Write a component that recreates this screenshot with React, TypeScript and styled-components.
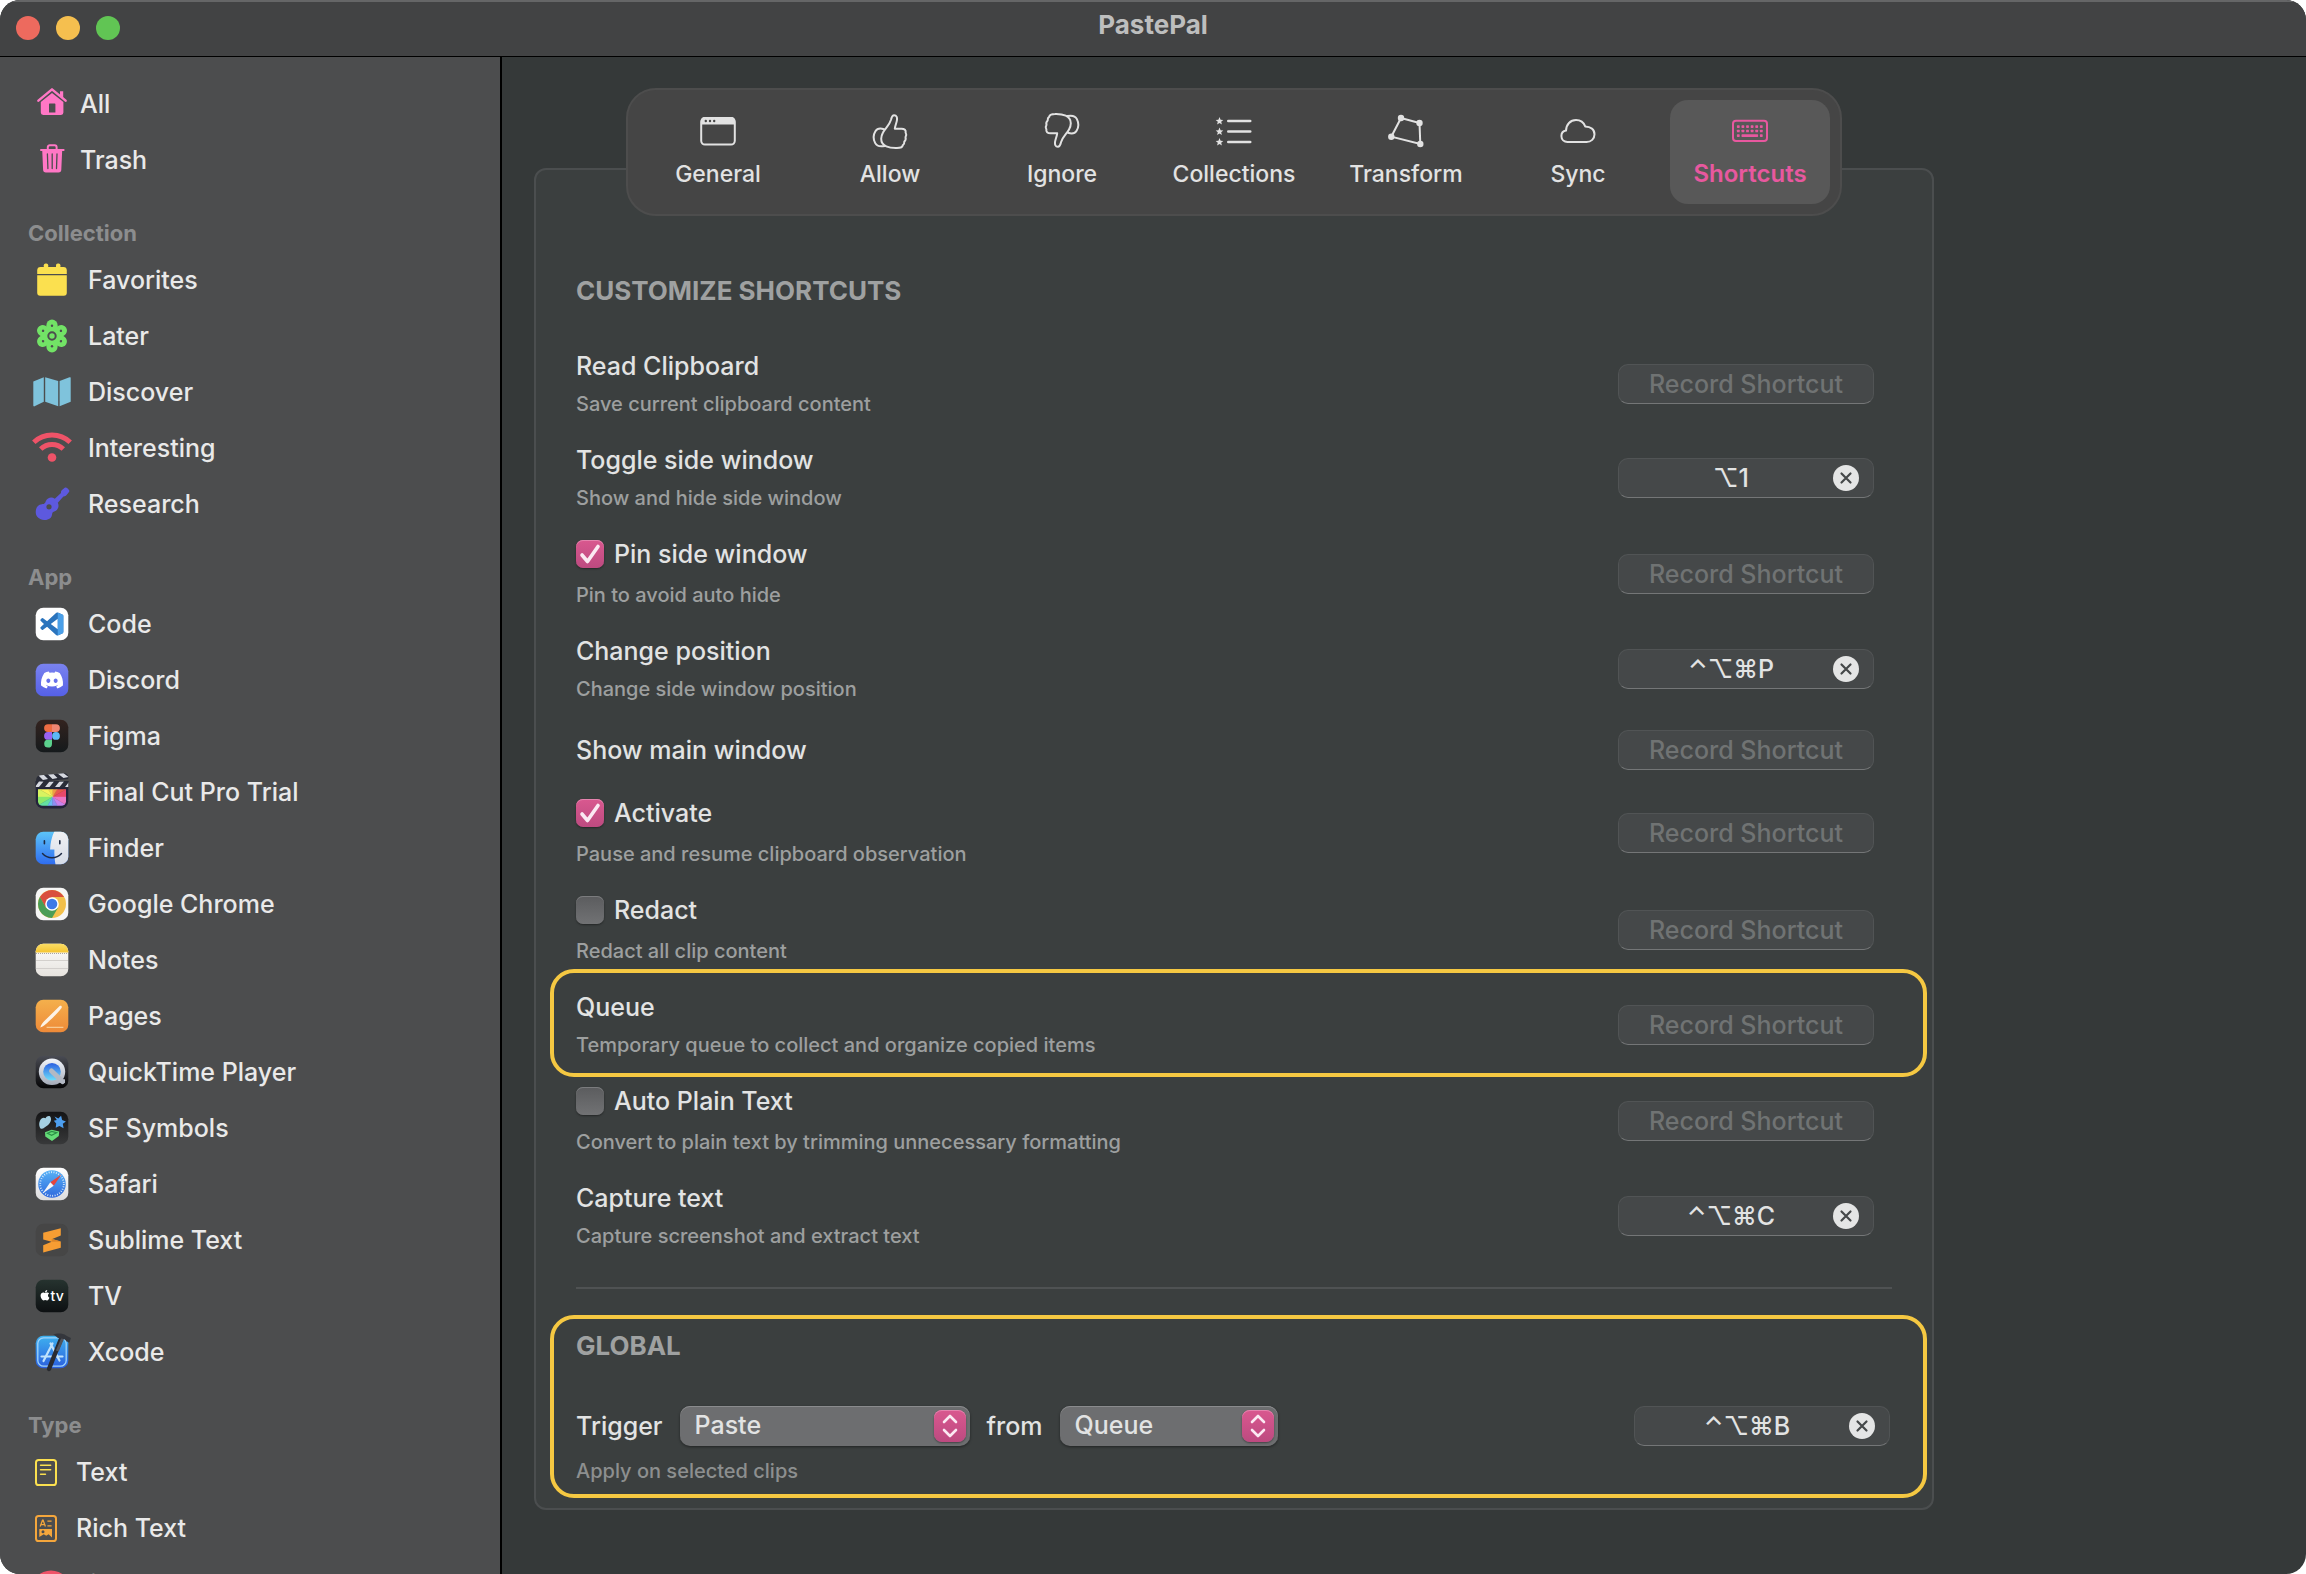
import React, { useState } from "react";
import type { ReactNode } from "react";
import styled, { createGlobalStyle, css } from "styled-components";
import { FaApple, FaDiscord } from "react-icons/fa";

const GlobalStyle = createGlobalStyle`
  *, *::before, *::after { box-sizing: border-box; }
  body {
    margin: 0;
    background: #ffffff;
    font-family: Inter, "DejaVu Sans", "Liberation Sans", sans-serif;
    font-size: 25px;
    font-weight: 500;
    color: #e2e3e3;
    -webkit-font-smoothing: antialiased;
  }
  button, input, select { font: inherit; color: inherit; margin: 0; }
`;

/* ---------- window ---------- */

const Window = styled.div`
  display: flex;
  flex-direction: column;
  height: 100vh;
  overflow: hidden;
  border-radius: 20px;
  background: #353939;
`;

const TitleBar = styled.header`
  display: grid;
  grid-template-columns: 1fr auto 1fr;
  align-items: center;
  height: 57px;
  flex: none;
  padding: 0 16px 2px;
  background: #424344;
  border-top: 2px solid #656667;
  border-bottom: 1px solid #000000;
`;

const Lights = styled.div`
  display: flex;
  gap: 16px;
`;

const Light = styled.button<{ $color: string }>`
  width: 24px;
  height: 24px;
  padding: 0;
  border: 0;
  border-radius: 50%;
  background: ${(p) => p.$color};
`;

const WindowTitle = styled.h1`
  margin: 0;
  padding-bottom: 6px;
  font-size: 26px;
  line-height: 30px;
  font-weight: 700;
  color: #bdbebe;
`;

const Body = styled.div`
  display: flex;
  flex: 1;
  min-height: 0;
`;

/* ---------- sidebar ---------- */

const Sidebar = styled.nav`
  width: 502px;
  flex: none;
  overflow: hidden;
  padding-top: 19px;
  background: #4c4d4e;
  border-right: 2px solid #000000;
`;

const GroupTitle = styled.h2`
  margin: 0;
  padding: 30px 28px 4px;
  font-size: 22px;
  line-height: 30px;
  font-weight: 700;
  color: #8c8d8e;
`;

const List = styled.ul`
  margin: 0;
  padding: 0;
  list-style: none;
`;

const Item = styled.a<{ $gap: number }>`
  display: flex;
  align-items: center;
  gap: ${(p) => p.$gap}px;
  height: 56px;
  padding: 0 32px;
  color: #e9e9e9;
  text-decoration: none;
  white-space: nowrap;
`;

const Glyph = styled.svg<{ $narrow?: boolean }>`
  width: ${(p) => (p.$narrow ? 28 : 40)}px;
  height: 40px;
  flex: none;
  overflow: visible;
`;

/* ---------- tabs ---------- */

const Main = styled.main`
  flex: 1;
  min-width: 0;
  overflow: hidden;
  padding: 31px 32px;
`;

const Column = styled.div`
  display: flex;
  flex-direction: column;
  align-items: center;
  max-width: 1400px;
`;

const TabBar = styled.div`
  position: relative;
  z-index: 1;
  display: flex;
  gap: 12px;
  margin-bottom: -48px;
  padding: 10px;
  border: 2px solid #4d4d4d;
  border-radius: 30px;
  background: #454545;
`;

const Tab = styled.button`
  display: flex;
  flex-direction: column;
  align-items: center;
  width: 160px;
  height: 104px;
  padding: 11px 0 0;
  gap: 8px;
  border: 0;
  border-radius: 18px;
  background: transparent;
  color: #e2e2e2;
  font-size: 23px;
  line-height: 30px;
  font-weight: 500;

  &[aria-selected="true"] {
    background: #585858;
    color: #e8589f;
    font-size: 24px;
    font-weight: 600;
  }
`;

/* ---------- panel ---------- */

const Panel = styled.section`
  width: 100%;
  padding: 106px 0 10px;
  border: 2px solid #4b4e4f;
  border-radius: 12px;
  background: #3b3f3f;
`;

const SectionTitle = styled.h2`
  margin: 0;
  font-size: 26px;
  line-height: 30px;
  font-weight: 700;
  color: #9fa1a1;
`;

const ShortcutSection = styled.div`
  padding: 0 58px 38px 40px;
`;

const Rows = styled.div`
  display: flex;
  flex-direction: column;
  gap: 28px;
  padding-top: 45px;
`;

const Row = styled.div<{ $marked?: boolean }>`
  position: relative;
  display: flex;
  align-items: center;
  justify-content: space-between;
  gap: 24px;

  ${(p) =>
    p.$marked &&
    css`
      &::after {
        content: "";
        position: absolute;
        inset: -23px -53px -19px -26px;
        border: 4px solid #f5c842;
        border-radius: 24px;
        pointer-events: none;
      }
    `}
`;

const Texts = styled.div<{ $gap: number }>`
  display: flex;
  flex-direction: column;
  gap: ${(p) => p.$gap}px;
`;

const RowTitle = styled.span`
  line-height: 30px;
`;

const CheckLabel = styled.label`
  display: flex;
  align-items: center;
  gap: 10px;
  line-height: 30px;
`;

const Note = styled.span<{ $dim?: boolean }>`
  font-size: 20px;
  line-height: 26px;
  color: ${(p) => (p.$dim ? "#8d8f8f" : "#9d9f9f")};
`;

const CheckBox = styled.input`
  appearance: none;
  width: 28px;
  height: 28px;
  flex: none;
  border-radius: 7px;
  background: linear-gradient(#5b5c5e, #717274);
  box-shadow: inset 0 1px 0 #7b7c7e, 0 1px 2px rgba(0, 0, 0, 0.4);

  &:checked {
    background: linear-gradient(#d9588f, #bd4a80);
    box-shadow: inset 0 1px 0 #e484ae, 0 1px 2px rgba(0, 0, 0, 0.4);
  }
`;

const CheckHolder = styled.span`
  position: relative;
  display: flex;
`;

const CheckMark = styled.svg`
  position: absolute;
  inset: 0;
  width: 28px;
  height: 28px;
  pointer-events: none;
`;

const Field = styled.div`
  display: flex;
  align-items: center;
  width: 256px;
  height: 40px;
  flex: none;
  padding: 0 14px 0 10px;
  border: 1px solid #515455;
  border-bottom-color: #747677;
  border-radius: 10px;
  background: #454849;
`;

const Record = styled.button<{ $empty?: boolean }>`
  flex: 1;
  height: 38px;
  padding: ${(p) => (p.$empty ? "1px 0 0 4px" : "1px 0 0")};
  border: 0;
  background: transparent;
  line-height: 37px;
  text-align: center;
  white-space: nowrap;
  color: ${(p) => (p.$empty ? "#707373" : "#e2e3e3")};
`;

const Clear = styled.button`
  display: flex;
  width: 26px;
  height: 26px;
  padding: 0;
  border: 0;
  border-radius: 50%;
  background: #e4e5e5;
  color: #454849;
`;

const Divider = styled.hr`
  height: 2px;
  margin: 0 40px 26px;
  border: 0;
  background: #4f5253;
`;

const GlobalSection = styled.div`
  margin: 0 5px 0 14px;
  padding: 12px 33px 10px 22px;
  border: 4px solid #f5c842;
  border-radius: 24px;
`;

const TriggerRow = styled.div`
  display: flex;
  align-items: center;
  justify-content: space-between;
  padding: 45px 0 8px;
`;

const Sentence = styled.div`
  display: flex;
  align-items: center;
  gap: 17px;
`;

const SelectHolder = styled.span<{ $width: number }>`
  position: relative;
  display: flex;
  width: ${(p) => p.$width}px;
`;

const Picker = styled.select`
  appearance: none;
  width: 100%;
  height: 40px;
  padding: 0 44px 2px 15px;
  border: 0;
  border-radius: 10px;
  background: #6d6e70;
  box-shadow: inset 0 1px 0 #8a8b8d, 0 1px 3px rgba(0, 0, 0, 0.45);
`;

const Stepper = styled.svg`
  position: absolute;
  top: 4px;
  right: 4px;
  width: 32px;
  height: 32px;
  border-radius: 8px;
  background: linear-gradient(#d9588f, #bd4a80);
  box-shadow: inset 0 1px 0 #e484ae, 0 1px 2px rgba(0, 0, 0, 0.4);
  pointer-events: none;
`;

/* ---------- sidebar symbols (40 x 40) ---------- */

const house = (
  <g fill="#ff77c5">
    <path d="M6.4 16.6 20 5.4l13.6 11.2" fill="none" stroke="#ff77c5" strokeWidth="2.5" strokeLinecap="round" strokeLinejoin="round" />
    <path d="M28 7.3h3.2v7.5L28 12z" />
    <path fillRule="evenodd" d="M8.8 18 20 8.9 31.4 18v10.6a2.4 2.4 0 0 1-2.4 2.4H11.2a2.4 2.4 0 0 1-2.4-2.4zM17.6 19.6a.6.6 0 0 0-.6.6v8.4h6.4v-8.4a.6.6 0 0 0-.6-.6z" />
  </g>
);

const trash = (
  <g>
    <path d="M15.8 9.4V7.2a2 2 0 0 1 2-2h4.8a2 2 0 0 1 2 2v2.2" fill="none" stroke="#ff77c5" strokeWidth="2" />
    <path d="M9 10h22.6" stroke="#ff77c5" strokeWidth="2" strokeLinecap="round" />
    <path d="M10.2 10h20l-.9 19.8a2.8 2.8 0 0 1-2.8 2.7h-12.6a2.8 2.8 0 0 1-2.8-2.7z" fill="#ff77c5" />
    <path d="M15.4 14l.5 14.5M20.2 14v14.5M25 14l-.5 14.5" stroke="#4c4d4e" strokeWidth="1.3" strokeLinecap="round" />
  </g>
);

const calendar = (
  <g fill="#fbe04f">
    <rect x="11.8" y="3.5" width="4.4" height="6" rx="1.8" />
    <rect x="24" y="3.5" width="4.4" height="6" rx="1.8" />
    <path d="M5.2 14v-3.5a3.4 3.4 0 0 1 3.4-3.4h22.8a3.4 3.4 0 0 1 3.4 3.4V14z" />
    <path d="M5.2 15.3h29.6v17.5a3 3 0 0 1-3 3H8.2a3 3 0 0 1-3-3z" />
  </g>
);

const atom = (
  <g>
    <g fill="#72e366">
      {[0, 60, 120].map((a) => (
        <rect key={a} x="14.4" y="3.6" width="11.2" height="32.8" rx="5.6" transform={`rotate(${a} 20 20)`} />
      ))}
      <circle cx="20" cy="20" r="10.5" />
    </g>
    <circle cx="20" cy="20" r="3.7" fill="#72e366" stroke="#4c4d4e" strokeWidth="2" />
    {[0, 60, 120, 180, 240, 300].map((a) => (
      <circle key={a} cx="20" cy="9.7" r="1.2" fill="#4c4d4e" transform={`rotate(${a} 20 20)`} />
    ))}
  </g>
);

const map = (
  <g fill="#7fc3dc">
    <path d="M1.3 9.6 11.8 5.3v24.5L2.5 34.3a.8.8 0 0 1-1.2-.7z" />
    <path d="M13.2 5.3 26.2 9v25.3l-13-4.5z" />
    <path d="M27.6 9l9.9-3.7a.8.8 0 0 1 1.2.7v23.8l-11.1 4.5z" />
  </g>
);

const wifi = (
  <g fill="none" stroke="#ef5368" strokeWidth="5">
    <path d="M1.8 14.3a26.5 26.5 0 0 1 36.4 0" />
    <path d="M8.7 21a16.5 16.5 0 0 1 22.6 0" />
    <circle cx="20" cy="29.5" r="4.3" fill="#ef5368" stroke="none" />
  </g>
);

const guitar = (
  <g>
    <path
      d="M3.8 29c-.5-5 2-8.4 6-8.7 3.2-.3 3.3-1.3 4-3 1.6-3.7 5.7-4.8 9-2.6l6.2-5.8c-.2-1.4.3-2.4 1.3-3.2l2.4-1.9c.8-.6 1.7-.5 2.4.2l1.7 1.8c.7.8.7 1.7 0 2.5l-2.2 2.8c-.8 1-1.7 1.4-3.2 1.3l-5.6 6.3c1.7 3.6.3 7.2-3 8.5-1.8.7-2.5 1-2.7 3-.4 3.8-3.5 6-8 5.7-4.8-.4-7.900-3-8.300-6.900z"
      fill="#5d59de"
    />
    <circle cx="17" cy="22.8" r="2.6" fill="#4c4d4e" />
  </g>
);

/* ---------- application icons (40 x 40) ---------- */

const tile = (fill: string) => <rect x="3.7" y="3.7" width="32.6" height="32.6" rx="7.6" fill={fill} />;

const fade = (id: string, from: string, to: string) => (
  <linearGradient id={id} x1="0" y1="0" x2="0" y2="1">
    <stop offset="0" stopColor={from} />
    <stop offset="1" stopColor={to} />
  </linearGradient>
);

const codeApp = (
  <g>
    {tile("#ffffff")}
    <svg x="8.2" y="8.3" width="23.4" height="23.4" viewBox="0 0 24 24">
      <path
        fill="#2b74bd"
        d="M23.15 2.587L18.21.21a1.494 1.494 0 0 0-1.705.29l-9.46 8.63-4.12-3.128a.999.999 0 0 0-1.276.057L.327 7.261A1 1 0 0 0 .326 8.74L3.899 12 .326 15.26a1 1 0 0 0 .001 1.479L1.65 17.94a.999.999 0 0 0 1.276.057l4.12-3.128 9.46 8.63a1.492 1.492 0 0 0 1.704.29l4.942-2.377A1.5 1.5 0 0 0 24 20.06V3.939a1.5 1.5 0 0 0-.85-1.352zm-5.146 14.861L10.826 12l7.178-5.448v10.896z"
      />
      <path fill="#4a9fe8" d="M18 .1l5.15 2.487A1.5 1.5 0 0 1 24 3.94v16.12a1.5 1.5 0 0 1-.85 1.352L18 23.9z" />
    </svg>
  </g>
);

const discordApp = (
  <g>
    <defs>{fade("discord", "#7a83ef", "#5560e6")}</defs>
    {tile("url(#discord)")}
    <FaDiscord x="8" y="8" size={24} color="#ffffff" />
  </g>
);

const figmaApp = (
  <g>
    <defs>{fade("figma", "#33231f", "#151a1c")}</defs>
    {tile("url(#figma)")}
    <path d="M20 8.2h-4a3.9 3.9 0 0 0 0 7.8h4z" fill="#ee6c43" />
    <path d="M20 8.2h4a3.9 3.9 0 0 1 0 7.8h-4z" fill="#f08672" />
    <path d="M20 16h-4a3.9 3.9 0 0 0 0 7.8h4z" fill="#9a62f2" />
    <circle cx="24" cy="19.9" r="3.9" fill="#5cb8f5" />
    <path d="M20 23.8h-4a3.9 3.9 0 1 0 4 3.9z" fill="#5bd18c" />
  </g>
);

const wheel = ["#e8486a", "#e9584d", "#f09a45", "#f8d44b", "#f6f25a", "#d8f360", "#8be86a", "#63e0a2", "#6bb9f2", "#8f8ff3", "#c882ee", "#ea76c4"];

const finalCutApp = (
  <g>
    <defs>
      <clipPath id="fc-screen">
        <path d="M6 17.2h28v12a4.6 4.6 0 0 1-4.6 4.6H10.6A4.6 4.6 0 0 1 6 29.2z" />
      </clipPath>
      <clipPath id="fc-slate">
        <path d="M4.2 7.6C4.2 5 6 3.6 8.4 3.2L32 1.2c2.4-.2 4 1.2 4.2 3.5l.1 2.4-28 2.6 28-.4v6H3.8z" />
      </clipPath>
    </defs>
    <path d="M3.7 9h32.6v20a7.6 7.6 0 0 1-7.6 7.6H11.3A7.6 7.6 0 0 1 3.7 29z" fill="#23243a" />
    <path d="M3.7 9h32.6v6.5H3.7z" fill="#2a2d38" />
    <g clipPath="url(#fc-slate)">
      <rect x="3" y="0" width="34" height="16" fill="#2a2d38" />
      <g fill="#d6d9e0">
        <path d="M6 3l5-1 5 5-5 1zM15.5 2l5-1 5 5-5 1zM25 1l5-1 6.5 5-5 1z" />
        <path d="M3 15l4-5.5h4.5L7 15zM13 15l4.5-5.500H22L17.500 15zM23 15l4.500-5.500H32L27.500 15zM33 15l4-5v5z" />
      </g>
    </g>
    <g clipPath="url(#fc-screen)">
      {wheel.map((color, i) => {
        const from = (-i * 30 * Math.PI) / 180;
        const to = (-(i + 1) * 30 * Math.PI) / 180;
        const at = (t: number) => `${20.7 + 26 * Math.cos(t)} ${25 + 26 * Math.sin(t)}`;
        return <path key={color} d={`M20.7 25L${at(from)}L${at(to)}z`} fill={color} stroke={color} strokeWidth="0.4" />;
      })}
    </g>
  </g>
);

const finderApp = (
  <g>
    <defs>
      {fade("finder-l", "#5cc4f8", "#2f6df0")}
      {fade("finder-r", "#f1f2f4", "#d5dce8")}
      <clipPath id="finder-clip">{tile("#fff")}</clipPath>
    </defs>
    {tile("url(#finder-l)")}
    <path clipPath="url(#finder-clip)" d="M22.5 3c-2.600 5.500-4.300 12-4.400 18.500h4.300c-.2 5 .2 10 1.200 15.500H37V3z" fill="url(#finder-r)" />
    <path d="M12.4 12.8v3M27.8 12.8v3" stroke="#1d2b45" strokeWidth="1.6" strokeLinecap="round" />
    <path d="M10.5 25.5c5 5.600 14 5.600 19 0" fill="none" stroke="#1d2b45" strokeWidth="1.4" strokeLinecap="round" />
  </g>
);

const chromeApp = (
  <g>
    {tile("#f6f6f5")}
    <circle cx="20" cy="20" r="14" fill="#f3c04a" />
    <path d="M7.88 13A14 14 0 0 1 32.12 13H20l-6.5 10.5z" fill="#d94f3e" />
    <path d="M7.88 13A14 14 0 0 0 20 34l6.1-10.5H13.9z" fill="#4a9d55" />
    <circle cx="20" cy="20" r="6.8" fill="#ffffff" />
    <circle cx="20" cy="20" r="5.3" fill="#3f7ae6" />
  </g>
);

const notesApp = (
  <g>
    <defs>
      {fade("notes-page", "#fdfdfc", "#e6e3de")}
      {fade("notes-top", "#fadf6a", "#f5c531")}
      <clipPath id="notes-clip">{tile("#fff")}</clipPath>
    </defs>
    {tile("url(#notes-page)")}
    <rect clipPath="url(#notes-clip)" x="3" y="3" width="34" height="9.5" fill="url(#notes-top)" />
    <path d="M4 13.5h32" stroke="#a9a69f" strokeWidth="1" strokeDasharray="1 1" />
    <path d="M4 20.5h32M4 28.5h32" stroke="#cfccc8" strokeWidth="0.9" />
  </g>
);

const pagesApp = (
  <g>
    <defs>{fade("pages", "#f4b04c", "#ee8a38")}</defs>
    {tile("url(#pages)")}
    <path d="M8.3 31.5c.8-2.600 2.300-4.700 4.800-7.200L27.400 10.300c1.500-1.200 3.100 0 2.100 1.700-2.300 3.500-9.600 10.700-14.600 15.200-2.200 2-4 3.200-6.600 4.300z" fill="#fdf3e6" />
    <path d="M15 31.3h16" stroke="#fbd9a8" strokeWidth="1" strokeLinecap="round" />
  </g>
);

const quickTimeApp = (
  <g>
    <defs>
      {fade("qt-tile", "#4a4c54", "#050506")}
      {fade("qt-ring", "#f2f5fb", "#a4abb8")}
      {fade("qt-lens", "#2b5fe0", "#6fe0fb")}
    </defs>
    {tile("url(#qt-tile)")}
    <circle cx="20" cy="19.8" r="13.2" fill="url(#qt-ring)" />
    <circle cx="20" cy="19.8" r="8.8" fill="url(#qt-lens)" />
    <path d="M19.500 19l11 10.500" stroke="#b3b9c4" strokeWidth="5" strokeLinecap="round" />
    <path d="M27 31h6v-4z" fill="#b3b9c4" />
  </g>
);

const sfSymbolsApp = (
  <g>
    <defs>{fade("sf", "#141415", "#38393a")}</defs>
    {tile("url(#sf)")}
    <path d="M8.500 20.500c-2-2.800-1.600-7.300.8-9.700 1.700-1.600 3.200-1.300 4.200-.5 1.300-2.300 4.200-3.100 5.200-.8 1 2.800-.5 6.100-3.300 8-2.300 1.600-4.500 4-6.900 3z" fill="#a5d0e2" />
    <path d="M22.500 8.500l3.800 1.900 2.800-2.600 1 4.200 3.800 1.400-3.100 2.400.8 4.400-4.200-2.100-3.700 1.700.5-4.300-2.400-2.800 3-.6z" fill="#4d9ff0" />
    <path d="M13 24.300l6.700-2.600 7.500 1.800-.4 4.500-6.800 5-6.700-4.500z" fill="#65dc78" />
    <path d="M15.500 25.200l4.200-1.700 4.900 1.200-5 2.600z" fill="none" stroke="#2b8f46" strokeWidth="1.2" />
  </g>
);

const safariApp = (
  <g>
    <defs>
      {fade("safari-tile", "#ffffff", "#dcdcde")}
      {fade("safari", "#58b2f6", "#2f69dd")}
    </defs>
    {tile("url(#safari-tile)")}
    <circle cx="20" cy="20" r="13.8" fill="url(#safari)" />
    <circle cx="20" cy="20" r="11.8" fill="none" stroke="#dfeefd" strokeWidth="1.8" strokeDasharray="0.9 1.57" />
    <path d="M29.5 10.5 18.3 18.3 21.7 21.7z" fill="#e5453d" />
    <path d="M10.5 29.5 18.3 18.3 21.7 21.7z" fill="#f5f6f8" />
  </g>
);

const sublimeApp = (
  <g>
    {tile("#464646")}
    <path d="M11.2 12.8 28.8 8.2v7.4l-8.5 3.500 8.500 2.400v6.300l-17.600 4.700v-7.200l8.500-3.600-8.500-2.300z" fill="#f69d33" />
    <path d="M19.7 21.7 28.8 21.5l-9.1-2.600z" fill="#d98428" />
  </g>
);

const tvApp = (
  <g>
    <defs>{fade("tv", "#26332f", "#0d1012")}</defs>
    {tile("url(#tv)")}
    <FaApple x="7" y="13.2" size={12} color="#ffffff" />
    <text x="18.6" y="25.2" fontSize="14" fontWeight="500" fill="#ffffff">
      tv
    </text>
  </g>
);

const xcodeApp = (
  <g>
    <defs>{fade("xcode", "#3fb2ef", "#2a5ede")}</defs>
    {tile("url(#xcode)")}
    <rect x="5.8" y="5.8" width="28.4" height="28.4" rx="5.8" fill="none" stroke="#9fd4fb" strokeWidth="1.3" />
    <g fill="none" stroke="#bfe2fc" strokeWidth="2.2" strokeLinecap="round">
      <path d="M20.500 11.500 11.500 29M18.500 11.500l9 17" />
      <path d="M9.5 24.5h21" />
    </g>
    <path d="M28.500 8 17 37" stroke="#2a2b30" strokeWidth="4.4" strokeLinecap="round" />
    <path d="M31 5.5 25.300 19" stroke="#51545c" strokeWidth="3" />
    <path d="M21 2.600c4-1.800 10-1.600 13 .8l2.300 1.400 2.700 1.200-1.500 4.200-3-.8c-1.300-2.200-3.600-3-6.400-2.800-2.700 0-3.600-2.500-7.100-4z" fill="#34363c" />
  </g>
);

/* ---------- type icons (28 x 40) ---------- */

const textType = (
  <g fill="none" stroke="#fbe04f" strokeWidth="2" strokeLinecap="round">
    <rect x="4" y="8" width="20" height="25" rx="2.6" />
    <path d="M8.5 13.2h10.2M8.5 17.7h10.2M8.5 22.2h5" strokeWidth="1.4" />
  </g>
);

const richType = (
  <g>
    <rect x="4" y="8" width="20" height="25" rx="2.6" fill="none" stroke="#f4a63c" strokeWidth="2" />
    <path d="M8.2 18.5l2.300-6.300h.6l2.300 6.300M9 16.600h3.600M15.400 13.200h4.200M15.400 17.800h4.200" fill="none" stroke="#f4a63c" strokeWidth="1.3" />
    <path fillRule="evenodd" d="M7.3 21h12.700v8.500l-3.400-3.200-2.400 1.500-2.400-1.500-4.500 2.700zM11 22.300a1.500 1.500 0 1 0 0 3 1.500 1.500 0 0 0 0-3z" fill="#f4a63c" />
  </g>
);

const linkType = <circle cx="19" cy="26.5" r="20" fill="#ef5368" />;

/* ---------- tab icons (40 x 40) ---------- */

const generalTab = (
  <g>
    <rect x="3.2" y="7" width="33.6" height="26.6" rx="3.8" fill="none" stroke="currentColor" strokeWidth="2" />
    <path d="M3 13.5V10a4 4 0 0 1 4-4h26a4 4 0 0 1 4 4v3.5z" fill="currentColor" />
    <g fill="#454545">
      <circle cx="7.8" cy="10" r="1.2" />
      <circle cx="12" cy="10" r="1.2" />
      <circle cx="16.2" cy="10" r="1.2" />
    </g>
  </g>
);

const thumb = (
  <g fill="none" stroke="currentColor" strokeWidth="2" strokeLinecap="round" strokeLinejoin="round">
    <path d="M13 21.5c2.2-4.3 6.4-7.2 8-12.8.6-2.500.9-4.500 3.100-4.500 2.500 0 3.200 2.300 2.900 4.600-.4 3-1.800 5.600-2.200 8.900h6.700c3 0 4.700 1.700 4.100 3.900.9 1.600.9 3.100-.1 4.500.5 1.700.2 3.300-1.200 4.500.2 1.700-.4 3-1.600 3.800-.2 2.100-2.100 2.600-5.700 2.600-7.500.2-15.800-1.400-15.800-9.200 0-2.400.7-4.300 1.800-6.300z" />
    <path d="M14 18.3c-3.300-1.200-6.900-.7-8.600 2-2 3.200-2 8.200-.3 11.600 1.500 2.900 5.500 3.900 9.700 3" />
  </g>
);

const star = "M0-3.9 1.1-1.3 3.8-1.1 1.7.8 2.4 3.5 0 2-2.4 3.5-1.7.8-3.8-1.1-1.1-1.3z";

const collectionsTab = (
  <g fill="currentColor">
    {[10, 20.5, 31].map((y) => (
      <g key={y}>
        <path d={star} transform={`translate(5.5 ${y})`} />
        <rect x="13" y={y - 1.3} width="24.5" height="2.6" rx="1.3" />
      </g>
    ))}
  </g>
);

const transformTab = (
  <g fill="currentColor" stroke="currentColor" strokeWidth="2">
    <path d="M15 7 33.5 12 34.3 33 5.3 25.7z" fill="none" />
    <g stroke="none">
      <circle cx="15" cy="7" r="3.2" />
      <circle cx="33.5" cy="12" r="3.2" />
      <circle cx="34.3" cy="33" r="3.2" />
      <circle cx="5.3" cy="25.7" r="3.2" />
    </g>
  </g>
);

const cloudTab = (
  <path
    d="M9.5 31c-3.500 0-6.100-2.500-6.100-5.900 0-2.900 1.900-5 4.600-5.500C8.200 13.500 12.400 9 18 9c4.400 0 7.700 2.300 9.200 6.400 5.400.2 9.300 3.100 9.300 7.900 0 4.600-3.400 7.700-8 7.700z"
    fill="none"
    stroke="currentColor"
    strokeWidth="2"
    strokeLinejoin="round"
  />
);

const keyboardTab = (
  <g fill="currentColor">
    <rect x="3" y="9.7" width="34" height="20.4" rx="3" fill="none" stroke="currentColor" strokeWidth="2" />
    {[14.3, 18.7].map((y) =>
      [6.9, 11.5, 16.1, 20.7, 25.3, 29.9].map((x) => <rect key={`${x}-${y}`} x={x} y={y} width="2.8" height="2.6" rx="0.6" />)
    )}
    <rect x="6.9" y="23.3" width="2.8" height="2.6" rx="0.6" />
    <rect x="11.5" y="23.3" width="16.6" height="2.6" rx="0.6" />
    <rect x="29.9" y="23.3" width="2.8" height="2.6" rx="0.6" />
  </g>
);

/* ---------- data ---------- */

type Entry = { label: string; icon: ReactNode };

const topItems: Entry[] = [
  { label: "All", icon: house },
  { label: "Trash", icon: trash },
];

const collections: Entry[] = [
  { label: "Favorites", icon: calendar },
  { label: "Later", icon: atom },
  { label: "Discover", icon: map },
  { label: "Interesting", icon: wifi },
  { label: "Research", icon: guitar },
];

const apps: Entry[] = [
  { label: "Code", icon: codeApp },
  { label: "Discord", icon: discordApp },
  { label: "Figma", icon: figmaApp },
  { label: "Final Cut Pro Trial", icon: finalCutApp },
  { label: "Finder", icon: finderApp },
  { label: "Google Chrome", icon: chromeApp },
  { label: "Notes", icon: notesApp },
  { label: "Pages", icon: pagesApp },
  { label: "QuickTime Player", icon: quickTimeApp },
  { label: "SF Symbols", icon: sfSymbolsApp },
  { label: "Safari", icon: safariApp },
  { label: "Sublime Text", icon: sublimeApp },
  { label: "TV", icon: tvApp },
  { label: "Xcode", icon: xcodeApp },
];

const types: Entry[] = [
  { label: "Text", icon: textType },
  { label: "Rich Text", icon: richType },
  { label: "Link", icon: linkType },
];

const tabs: Entry[] = [
  { label: "General", icon: generalTab },
  { label: "Allow", icon: thumb },
  { label: "Ignore", icon: <g transform="rotate(180 20 20)">{thumb}</g> },
  { label: "Collections", icon: collectionsTab },
  { label: "Transform", icon: transformTab },
  { label: "Sync", icon: cloudTab },
  { label: "Shortcuts", icon: keyboardTab },
];

type Shortcut = { title: string; note?: string; keys?: string; checked?: boolean; marked?: boolean };

const shortcuts: Shortcut[] = [
  { title: "Read Clipboard", note: "Save current clipboard content" },
  { title: "Toggle side window", note: "Show and hide side window", keys: "⌥1" },
  { title: "Pin side window", note: "Pin to avoid auto hide", checked: true },
  { title: "Change position", note: "Change side window position", keys: "⌃⌥⌘P" },
  { title: "Show main window" },
  { title: "Activate", note: "Pause and resume clipboard observation", checked: true },
  { title: "Redact", note: "Redact all clip content", checked: false },
  { title: "Queue", note: "Temporary queue to collect and organize copied items", marked: true },
  { title: "Auto Plain Text", note: "Convert to plain text by trimming unnecessary formatting", checked: false },
  { title: "Capture text", note: "Capture screenshot and extract text", keys: "⌃⌥⌘C" },
];

/* ---------- parts ---------- */

function SideList({ items, gap, narrow }: { items: Entry[]; gap: number; narrow?: boolean }) {
  return (
    <List>
      {items.map((item) => (
        <li key={item.label}>
          <Item href="#" $gap={gap}>
            <Glyph $narrow={narrow} viewBox={narrow ? "0 0 28 40" : "0 0 40 40"} aria-hidden="true">
              {item.icon}
            </Glyph>
            {item.label}
          </Item>
        </li>
      ))}
    </List>
  );
}

function Recorder({ name, keys }: { name: string; keys?: string }) {
  return (
    <Field>
      <Record type="button" $empty={!keys} aria-label={keys ? undefined : `Record Shortcut: ${name}`}>
        {keys ?? "Record Shortcut"}
      </Record>
      {keys && (
        <Clear type="button" aria-label={`Clear shortcut: ${name}`}>
          <svg width="26" height="26" viewBox="0 0 26 26" aria-hidden="true">
            <path d="M8.5 8.5l9 9M17.5 8.5l-9 9" stroke="currentColor" strokeWidth="2.2" strokeLinecap="round" />
          </svg>
        </Clear>
      )}
    </Field>
  );
}

function Toggle({ title, initial }: { title: string; initial: boolean }) {
  const [on, setOn] = useState(initial);
  return (
    <CheckLabel>
      <CheckHolder>
        <CheckBox type="checkbox" checked={on} onChange={(e) => setOn(e.target.checked)} />
        {on && (
          <CheckMark viewBox="0 0 28 28" aria-hidden="true">
            <path d="M6 15l5.5 6.5L22 6.5" fill="none" stroke="#fbe9f2" strokeWidth="3.6" strokeLinecap="round" strokeLinejoin="round" />
          </CheckMark>
        )}
      </CheckHolder>
      {title}
    </CheckLabel>
  );
}

function PopUp({ label, width, options }: { label: string; width: number; options: string[] }) {
  return (
    <SelectHolder $width={width}>
      <Picker aria-label={label} defaultValue={options[0]}>
        {options.map((o) => (
          <option key={o}>{o}</option>
        ))}
      </Picker>
      <Stepper viewBox="0 0 32 32" aria-hidden="true">
        <path d="M10 12l6-6 6 6M10 20l6 6 6-6" fill="none" stroke="#fbe9f2" strokeWidth="2.6" strokeLinecap="round" strokeLinejoin="round" />
      </Stepper>
    </SelectHolder>
  );
}

export default function App() {
  const [tab, setTab] = useState("Shortcuts");
  return (
    <>
      <GlobalStyle />
      <Window>
        <TitleBar>
          <Lights>
            <Light type="button" aria-label="Close" $color="#ed6a5e" />
            <Light type="button" aria-label="Minimize" $color="#f5bf4f" />
            <Light type="button" aria-label="Zoom" $color="#61c554" />
          </Lights>
          <WindowTitle>PastePal</WindowTitle>
        </TitleBar>
        <Body>
          <Sidebar>
            <SideList items={topItems} gap={8} />
            <GroupTitle>Collection</GroupTitle>
            <SideList items={collections} gap={16} />
            <GroupTitle>App</GroupTitle>
            <SideList items={apps} gap={16} />
            <GroupTitle>Type</GroupTitle>
            <SideList items={types} gap={16} narrow />
          </Sidebar>
          <Main>
            <Column>
              <TabBar role="tablist">
                {tabs.map((t) => (
                  <Tab key={t.label} type="button" role="tab" aria-selected={t.label === tab} onClick={() => setTab(t.label)}>
                    <Glyph viewBox="0 0 40 40" aria-hidden="true">
                      {t.icon}
                    </Glyph>
                    {t.label}
                  </Tab>
                ))}
              </TabBar>
              <Panel>
                <ShortcutSection>
                  <SectionTitle>CUSTOMIZE SHORTCUTS</SectionTitle>
                  <Rows>
                    {shortcuts.map((s) => (
                      <Row key={s.title} $marked={s.marked}>
                        <Texts $gap={s.checked === undefined ? 10 : 13}>
                          {s.checked === undefined ? <RowTitle>{s.title}</RowTitle> : <Toggle title={s.title} initial={s.checked} />}
                          {s.note && <Note>{s.note}</Note>}
                        </Texts>
                        <Recorder name={s.title} keys={s.keys} />
                      </Row>
                    ))}
                  </Rows>
                </ShortcutSection>
                <Divider />
                <GlobalSection>
                  <SectionTitle>GLOBAL</SectionTitle>
                  <TriggerRow>
                    <Sentence>
                      <span>Trigger</span>
                      <PopUp label="Action" width={290} options={["Paste", "Copy"]} />
                      <span>from</span>
                      <PopUp label="Source" width={218} options={["Queue", "Clipboard"]} />
                    </Sentence>
                    <Recorder name="Trigger" keys="⌃⌥⌘B" />
                  </TriggerRow>
                  <Note $dim>Apply on selected clips</Note>
                </GlobalSection>
              </Panel>
            </Column>
          </Main>
        </Body>
      </Window>
    </>
  );
}
